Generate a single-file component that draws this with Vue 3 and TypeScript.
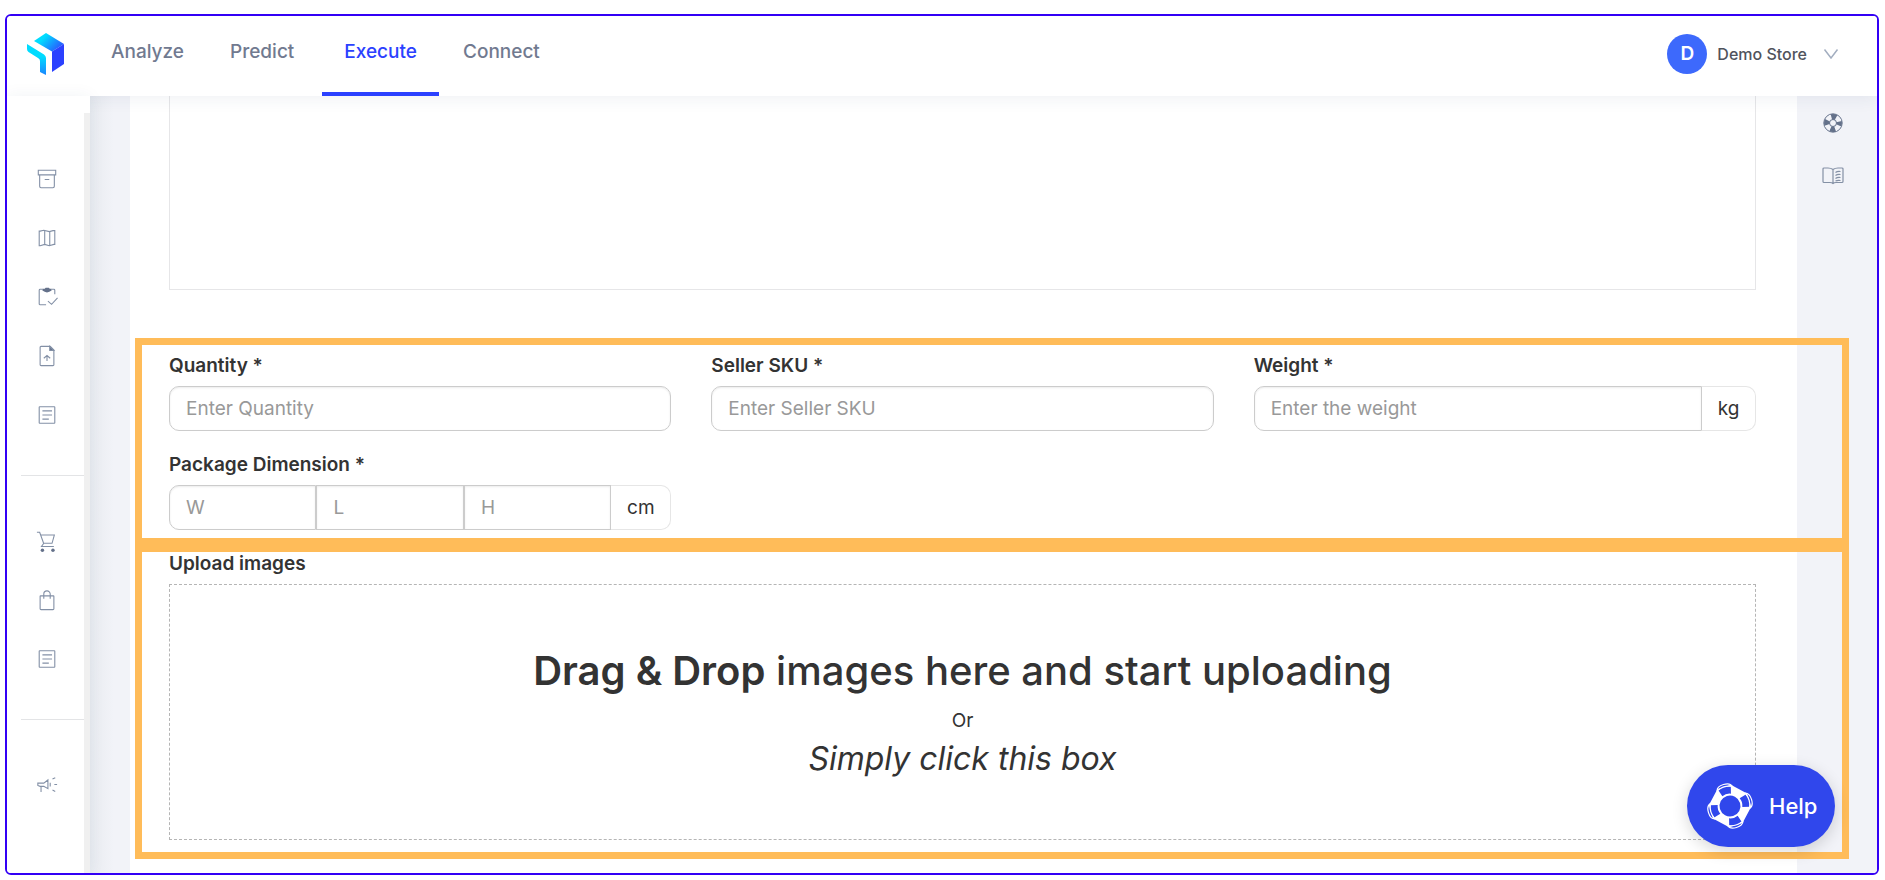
<script setup lang="ts">
import { ref } from 'vue'

interface NavItem { label: string; active?: boolean }
interface SideItem { label: string; icon: string }
interface Side { place: string; items: SideItem[] }

const nav: NavItem[] = [
  { label: 'Analyze' },
  { label: 'Predict' },
  { label: 'Execute', active: true },
  { label: 'Connect' },
]

const groups: Side[] = [
  {
    place: 'first',
    items: [
      { label: 'Inventory', icon: 'M2.5 2.5h19v5h-19zM4 7.5v12.5a1.500 1.500 0 0 0 1.500 1.500h13a1.500 1.500 0 0 0 1.500-1.500V7.500M9.500 12.500h5' },
      { label: 'Map', icon: 'M3.500 4.500h1l4-1 6 1.500 4-1h2v15h-1l-5 1.500-5-1.500-5 1.500h-1zM9.500 3.500V19M15 5v15.500' },
      { label: 'Tasks', icon: 'M7 3.500H4.500A1 1 0 0 0 3.500 4.500v15a1 1 0 0 0 1 1h6.500M17 3.500h2.500a1 1 0 0 1 1 1V9M13 16.500l4 3.500L23.500 13' },
      { label: 'Upload', icon: 'M15.500 1.500H5.500A1 1 0 0 0 4.500 2.500v19a1 1 0 0 0 1 1h13a1 1 0 0 0 1-1V5.500zM12 17.500v-6M8.500 14.500l3.500-3 3.500 3' },
      { label: 'Listings', icon: 'M4 3h16a.5.5 0 0 1 .5.5v17a.5.5 0 0 1-.5.5H4a.5.5 0 0 1-.5-.5v-17A.5.5 0 0 1 4 3zM7 7.500h10.500M7 12h10.500M7 16.500h7' },
    ],
  },
  {
    place: 'second',
    items: [
      { label: 'Cart', icon: 'M1 2.500h3L8.500 15M5.500 5.500h14.500l-2.500 9H8.500L6 18h13.500' },
      { label: 'Orders', icon: 'M5 7.500h14a.5.5 0 0 1 .5.5v13.500a1 1 0 0 1-1 1H5.500a1 1 0 0 1-1-1V8a.5.5 0 0 1 .5-.5zM8.500 10.500V5.500a3.500 3.500 0 0 1 7 0v5' },
      { label: 'Reports', icon: 'M4 3h16a.5.5 0 0 1 .5.5v17a.5.5 0 0 1-.5.5H4a.5.5 0 0 1-.5-.5v-17A.5.5 0 0 1 4 3zM7 7.500h10.500M7 12h10.500M7 16.500h7' },
    ],
  },
  {
    place: 'third',
    items: [
      { label: 'Campaigns', icon: 'M2 10h6.500L13 6.500v9.500l-4.500-2.500H4.500L2 12.500zM5.500 13.500v6M15.500 9.500v4M18 5.500l3-1.500M20 11.500h3M18 17.500l3 1.500' },
    ],
  },
]

const quantity = ref('')
const sku = ref('')
const weight = ref('')
const description = ref('')
const dims = ref([
  { hint: 'W', name: 'Width', value: '' },
  { hint: 'L', name: 'Length', value: '' },
  { hint: 'H', name: 'Height', value: '' },
])
</script>

<template>
  <div class="page">
    <div class="frame">
      <header class="header">
        <a class="logo" href="#" aria-label="Home">
          <svg width="38" height="42" viewBox="0 0 38 42">
            <defs>
              <linearGradient id="roof" x1="0" y1="0" x2="1" y2="0.600">
                <stop offset="0.350" stop-color="#00dcff" />
                <stop offset="1" stop-color="#2958ff" />
              </linearGradient>
              <linearGradient id="stem" x1="0" y1="0" x2="0" y2="1">
                <stop offset="0.400" stop-color="#00dcff" />
                <stop offset="1" stop-color="#1b86ff" />
              </linearGradient>
            </defs>
            <path d="M7 8L19 0L37 11L25 18.500Z" fill="url(#roof)" />
            <path d="M37 11V31L25 39V18.500Z" fill="#2b41ff" />
            <path d="M0 11L17 21.500Q19 23 19 25V42L13 39V28Q13 26 11 25L1.500 19Q0 18 0 16Z" fill="url(#stem)" />
          </svg>
        </a>
        <nav class="nav">
          <a v-for="n in nav" :key="n.label" href="#" class="tab" :class="{ active: n.active }">{{ n.label }}</a>
        </nav>
        <button class="account" type="button">
          <span class="avatar">D</span>
          <span class="store">Demo Store</span>
          <svg width="16" height="12" viewBox="0 0 16 12" fill="none" stroke="#a3aec0" stroke-width="1.500"><path d="M1.500 1.500L8 10L14.500 1.500" /></svg>
        </button>
      </header>

      <div class="body">
        <aside class="sidebar">
          <div class="menu">
            <div v-for="g in groups" :key="g.place" class="group" :class="g.place">
              <a v-for="s in g.items" :key="s.label" href="#" class="side-link" :aria-label="s.label">
                <svg width="22" height="22" viewBox="0 0 24 24" fill="none" stroke="#8390a6" stroke-width="1.200">
                  <path :d="s.icon" />
                  <path v-if="s.label === 'Tasks'" d="M7 3h2.500l1-1h3.500l1 1H17v2q-5 4-10 0z" fill="#64718a" stroke="none" />
                  <path v-if="s.label === 'Upload'" d="M15 1.500L19.500 6H15z" fill="#64718a" />
                  <g v-if="s.label === 'Cart'" fill="#64718a" stroke="none"><circle cx="7" cy="22" r="1.900" /><circle cx="18.500" cy="22" r="1.900" /></g>
                </svg>
              </a>
            </div>
          </div>
        </aside>

        <main class="content">
          <textarea v-model="description" class="description" aria-label="Description"></textarea>

          <section class="panel details">
            <div class="field">
              <label for="quantity">Quantity *</label>
              <div class="control"><input id="quantity" v-model="quantity" type="text" placeholder="Enter Quantity"></div>
            </div>
            <div class="field">
              <label for="sku">Seller SKU *</label>
              <div class="control"><input id="sku" v-model="sku" type="text" placeholder="Enter Seller SKU"></div>
            </div>
            <div class="field">
              <label for="weight">Weight *</label>
              <div class="control">
                <input id="weight" v-model="weight" type="text" placeholder="Enter the weight">
                <span class="unit kg">kg</span>
              </div>
            </div>
            <div class="field">
              <label for="dim-W">Package Dimension *</label>
              <div class="control">
                <input v-for="d in dims" :id="'dim-' + d.hint" :key="d.hint" v-model="d.value" type="text" :placeholder="d.hint" :aria-label="d.name">
                <span class="unit">cm</span>
              </div>
            </div>
          </section>

          <section class="panel upload">
            <label for="images">Upload images</label>
            <button id="images" class="drop" type="button">
              <span class="lead"><strong>Drag &amp; Drop</strong> images here and start uploading</span>
              <span class="or">Or</span>
              <em class="hint">Simply click this box</em>
            </button>
          </section>
        </main>

        <aside class="rail">
          <a href="#" aria-label="Support">
            <svg width="20" height="20" viewBox="0 0 20 20" fill="none">
              <circle cx="10" cy="10" r="6.200" stroke="#64718a" stroke-width="5.500" stroke-dasharray="4.870 4.870" stroke-dashoffset="2.435" />
              <circle cx="10" cy="10" r="9.200" stroke="#64718a" />
              <circle cx="10" cy="10" r="3.500" stroke="#64718a" />
            </svg>
          </a>
          <a href="#" aria-label="Guide">
            <svg width="22" height="18" viewBox="0 0 22 18" fill="none" stroke="#8490a5" stroke-width="1.200">
              <path d="M11 2.500Q9 1 6 1H2a1 1 0 0 0-1 1v12.500a1 1 0 0 0 1 1h6q2 0 3 1 1-1 3-1h6a1 1 0 0 0 1-1V2a1 1 0 0 0-1-1h-4q-3 0-5 1.500zV16" />
              <path d="M13.500 5.500q2-1.500 5-1M13.500 8.500q2-1.500 5-1M13.500 11.500q2-1.500 5-1M13.500 14q2-1 5-.5" />
            </svg>
          </a>
        </aside>
      </div>
    </div>

    <button class="help" type="button">
      <svg width="46" height="46" viewBox="0 0 46 46" fill="none">
        <g transform="rotate(-17 23 23) rotate(45 23 23) rotate(-45 23 23)">
          <path d="M16 3H30L43 16V30L30 43H16L3 30V16Z" fill="#fff" />
          <g v-for="a in [0, 90, 180, 270]" :key="a" :transform="`rotate(${a} 23 23)`">
            <path d="M16.500 4.500Q23 1.500 29.500 4.500L27.500 11.500Q23 9.500 18.500 11.500Z" fill="#3047ec" />
            <path d="M15 5Q16 .5 23 .5Q30 .5 31 5" stroke="#fff" stroke-width="1.200" />
            <path d="M16 4.500Q23 1.500 30 4.500" stroke="#fff" stroke-width="1.200" />
          </g>
          <circle cx="23" cy="23" r="10.500" fill="#3047ec" />
        </g>
      </svg>
      <span>Help</span>
    </button>
  </div>
</template>

<style>
body { margin: 0; background: #fff; }
</style>

<style scoped>
* { box-sizing: border-box; }
.page {
  position: relative;
  min-height: 100vh;
  padding: 14px 6px 5px 5px;
  font-family: Inter, "Liberation Sans", sans-serif;
  font-optical-sizing: none;
  font-size: 19px;
  line-height: 24px;
  color: #333;
}
input, button, textarea { font: inherit; color: inherit; font-optical-sizing: inherit; }
.frame { border: 2px solid #3300f5; border-radius: 6px; overflow: hidden; }
.header {
  position: relative;
  z-index: 2;
  display: flex;
  height: 80px;
  padding-right: 38px;
  background: #fff;
  box-shadow: 0 2px 16px rgba(40, 60, 100, 0.080);
}
.logo { margin: 17px 24px 0 20px; height: 42px; }
.logo svg, .rail svg, .side-link svg { display: block; }
.nav { display: flex; flex: 1; gap: 2px; }
.tab {
  padding: 24px 22px 0;
  color: #717a90;
  text-decoration: none;
  font-weight: 500;
  border-bottom: 4px solid transparent;
}
.tab.active { margin-left: 4px; color: #2b41ff; border-color: #2b41ff; }
.account {
  display: flex;
  align-items: center;
  align-self: flex-start;
  gap: 10px;
  height: 40px;
  margin-top: 18px;
  padding: 0;
  border: 0;
  background: none;
  color: #50535c;
  font-size: 16px;
  font-weight: 500;
}
.avatar {
  width: 40px;
  line-height: 40px;
  border-radius: 50%;
  background: #3d69fc;
  color: #fff;
  font-size: 19px;
  font-weight: 600;
  text-align: center;
}
.store { margin-right: 6px; }
.body {
  display: grid;
  grid-template-columns: 83px minmax(0, 1fr) 80px;
}
.sidebar {
  position: relative;
  z-index: 3;
  padding-top: 17px;
  background: #fff;
  box-shadow: 0 0 16px rgba(40, 60, 100, 0.060);
}
.menu { height: 100%; border-right: 6px solid #f0f0f0; }
.group { display: flex; flex-direction: column; gap: 37px; padding: 55px 0 0 29px; }
.second, .third { position: relative; margin-top: 49px; }
.second::before, .third::before {
  content: "";
  position: absolute;
  top: 0;
  left: 14px;
  right: 0;
  height: 1px;
  background: #e3e4e6;
}
.side-link { height: 22px; width: 22px; }
.content {
  position: relative;
  z-index: 1;
  padding: 0 0 14px 40px;
  background: linear-gradient(to right, #e8ebf0, #f2f3f8 24px, #f2f3f8 40px, #fff 40px);
}
.description {
  display: block;
  width: calc(100% - 80px);
  height: 194px;
  margin: 0 41px 48px 39px;
  border: 1px solid #e6e6e8;
  border-top: 0;
  background: none;
  resize: none;
}
.panel {
  margin: 0 -52px 0 5px;
  border: 7px solid #ffbc59;
  padding: 0 86px 0 27px;
}
.details {
  display: grid;
  grid-template-columns: repeat(3, minmax(0, 1fr));
  gap: 22px 40px;
  padding-top: 9px;
  padding-bottom: 8px;
}
label { display: block; font-weight: 600; }
.control { display: flex; height: 45px; margin-top: 8px; }
.control input {
  flex: 1;
  min-width: 0;
  padding: 0 16px;
  border: 1px solid #ccc;
  border-radius: 0;
  background: #fff;
  box-shadow: inset 0 1px 2px rgba(0, 0, 0, 0.080);
  outline: none;
}
.control input:first-child { border-radius: 10px 0 0 10px; }
.control input:only-child { border-radius: 10px; }
.control input::placeholder { color: #999; opacity: 1; }
.unit {
  width: 60px;
  border: 1px solid #e6e6e6;
  border-left: 0;
  border-radius: 0 10px 10px 0;
  line-height: 43px;
  text-align: center;
}
.unit.kg { width: 54px; }
.upload { padding-bottom: 12px; }
.upload label { margin-bottom: 8px; }
.drop {
  display: flex;
  flex-direction: column;
  align-items: center;
  width: 100%;
  padding: 60px 0 60px;
  border: 1px dashed #b5b5b5;
  background: none;
}
.lead { font-size: 40px; line-height: 52px; font-weight: 500; }
.lead strong { font-weight: 600; }
.or { margin-top: 12px; }
.hint { font-size: 32px; line-height: 40px; margin-top: 6px; }
.rail {
  background: #f2f3f8;
  display: flex;
  flex-direction: column;
  align-items: center;
  gap: 34px;
  padding: 17px 8px 0 0;
}
.help {
  position: absolute;
  z-index: 4;
  right: 50px;
  bottom: 33px;
  display: flex;
  align-items: center;
  gap: 16px;
  width: 148px;
  height: 82px;
  padding: 0 0 0 20px;
  border: 0;
  border-radius: 41px;
  background: #3047ec;
  color: #fff;
  font-size: 22px;
  font-weight: 500;
  box-shadow: 0 4px 16px rgba(0, 0, 0, 0.160);
}
</style>
